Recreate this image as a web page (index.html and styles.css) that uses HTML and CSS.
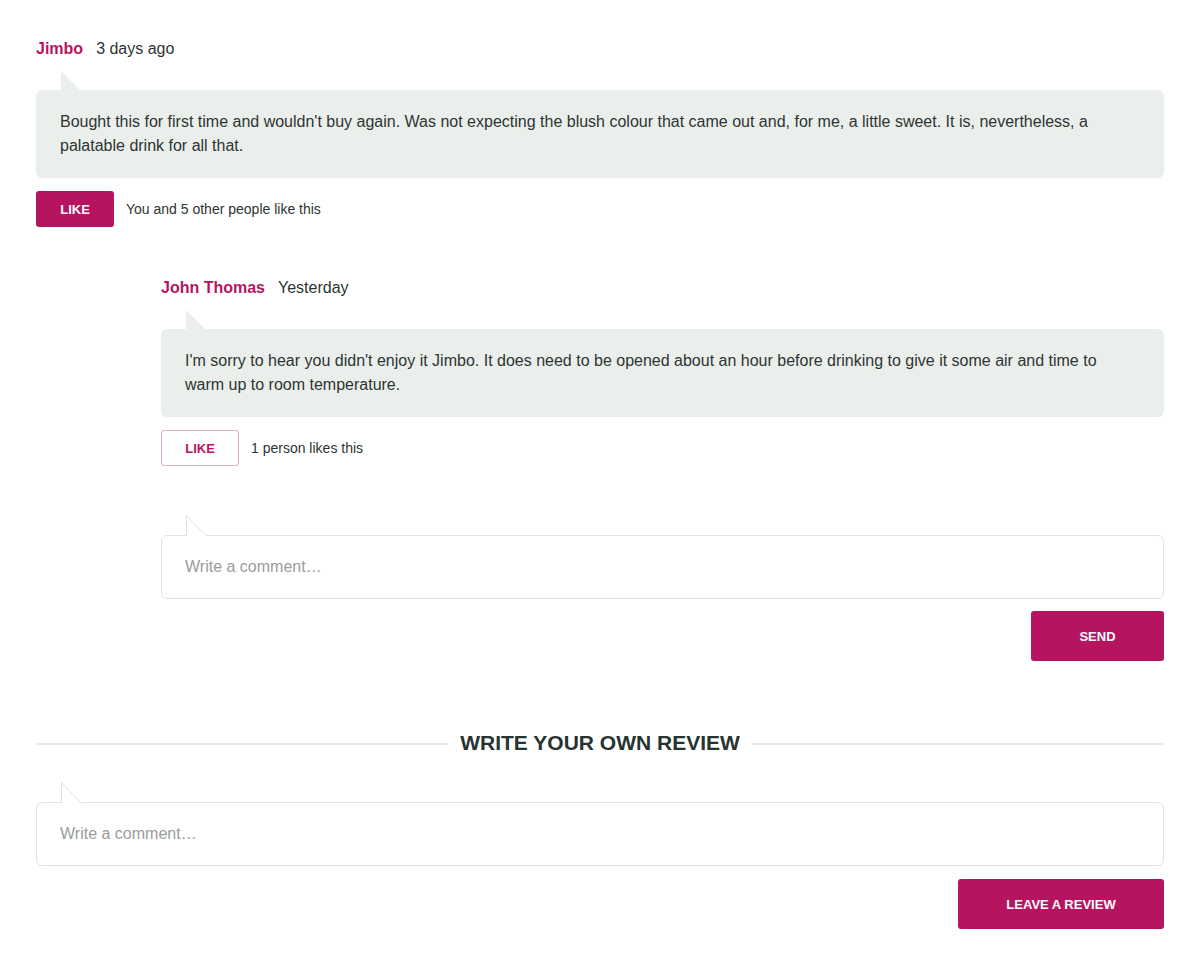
FILE: index.html
```html
<!DOCTYPE html>
<html lang="en">
<head>
<meta charset="utf-8">
<title>Reviews</title>
<link rel="stylesheet" href="styles.css">
</head>
<body>
<div class="page">
  <div class="comment">
    <div class="meta"><span class="author">Jimbo</span><span class="time">3 days ago</span></div>
    <div class="bubble">
      <svg class="tail" width="20" height="20" viewBox="0 0 20 20"><polygon points="0,0 0,20 20,20" fill="#ebefec"/></svg>
      <p>Bought this for first time and wouldn't buy again. Was not expecting the blush colour that came out and, for me, a little sweet. It is, nevertheless, a palatable drink for all that.</p>
    </div>
    <div class="actions">
      <button class="like like-filled">LIKE</button>
      <span class="likes">You and 5 other people like this</span>
    </div>

    <div class="reply">
      <div class="meta"><span class="author">John Thomas</span><span class="time">Yesterday</span></div>
      <div class="bubble">
        <svg class="tail" width="20" height="20" viewBox="0 0 20 20"><polygon points="0,0 0,20 20,20" fill="#ebefec"/></svg>
        <p>I'm sorry to hear you didn't enjoy it Jimbo. It does need to be opened about an hour before drinking to give it some air and time to warm up to room temperature.</p>
      </div>
      <div class="actions">
        <button class="like like-outline">LIKE</button>
        <span class="likes">1 person likes this</span>
      </div>

      <form class="comment-form reply-form">
        <div class="input-box">
          <svg class="tail input-tail" width="21" height="21" viewBox="0 0 21 21"><polygon points="0.5,0.5 0.5,21 20,21" fill="#fff" stroke="#dfe4e1" stroke-width="1"/><rect x="1" y="20" width="19" height="1.5" fill="#fff"/></svg>
          <div class="placeholder">Write a comment…</div>
        </div>
        <div class="form-actions"><button type="button" class="btn send">SEND</button></div>
      </form>
    </div>
  </div>

  <h2 class="section-title"><span>WRITE YOUR OWN REVIEW</span></h2>

  <form class="comment-form review-form">
    <div class="input-box">
      <svg class="tail input-tail" width="21" height="21" viewBox="0 0 21 21"><polygon points="0.5,0.5 0.5,21 20,21" fill="#fff" stroke="#dfe4e1" stroke-width="1"/><rect x="1" y="20" width="19" height="1.5" fill="#fff"/></svg>
      <div class="placeholder">Write a comment…</div>
    </div>
    <div class="form-actions"><button type="button" class="btn leave">LEAVE A REVIEW</button></div>
  </form>
</div>
</body>
</html>
```

FILE: styles.css
```css
* { box-sizing: border-box; }
html, body { margin: 0; padding: 0; background: #fff; }
body {
  font-family: "Liberation Sans", Arial, sans-serif;
  color: #2d3532;
}
.page {
  padding: 37px 36px 30px;
}
.meta {
  display: flex;
  align-items: center;
  gap: 13px;
  font-size: 16px;
  line-height: 24px;
}
.author {
  color: #b71460;
  font-weight: bold;
}
.time { color: #2d3532; }
.bubble {
  position: relative;
  margin-top: 29px;
  background: #ebefec;
  border-radius: 6px;
  padding: 20px 24px 20px;
}
.bubble p {
  margin: 0;
  font-size: 16px;
  line-height: 24px;
}
.tail {
  position: absolute;
  display: block;
  left: 25px;
  top: -19px;
}
.actions {
  display: flex;
  align-items: center;
  gap: 12px;
  margin-top: 13px;
}
.like {
  width: 78px;
  height: 36px;
  border-radius: 3px;
  font-family: inherit;
  font-size: 13px;
  font-weight: bold;
  padding: 0;
  cursor: pointer;
}
.like-filled {
  background: #b71460;
  color: #fff;
  border: 0;
}
.like-outline {
  background: #fff;
  color: #b71460;
  border: 1px solid #dcb0c5;
}
.likes {
  font-size: 14px;
  color: #2d3532;
}
.reply {
  margin-left: 125px;
  margin-top: 49px;
}
.comment-form { display: block; }
.reply-form { margin-top: 69px; }
.review-form { margin-top: 47px; }
.input-box {
  position: relative;
  height: 64px;
  border: 1px solid #dfe4e1;
  border-radius: 6px;
  background: #fff;
  display: flex;
  align-items: center;
  padding: 0 23px;
}
.input-tail {
  left: 24px;
  top: -21px;
}
.placeholder {
  font-size: 16px;
  color: #999c9b;
  margin-top: -1px;
}
.form-actions {
  display: flex;
  justify-content: flex-end;
  margin-top: 12px;
}
.review-form .form-actions { margin-top: 13px; }
.btn {
  height: 50px;
  background: #b71460;
  color: #fff;
  border: 0;
  border-radius: 3px;
  font-family: inherit;
  font-size: 13px;
  font-weight: bold;
  padding: 0;
  cursor: pointer;
}
.send { width: 133px; }
.leave { width: 206px; }
.section-title {
  display: flex;
  align-items: center;
  gap: 12px;
  margin: 70px 0 0;
  font-size: 21px;
  line-height: 24px;
  font-weight: bold;
  color: #263330;
}
.section-title::before,
.section-title::after {
  content: "";
  flex: 1;
  height: 2px;
  background: #e6ebe8;
  margin-top: 2px;
}
```
